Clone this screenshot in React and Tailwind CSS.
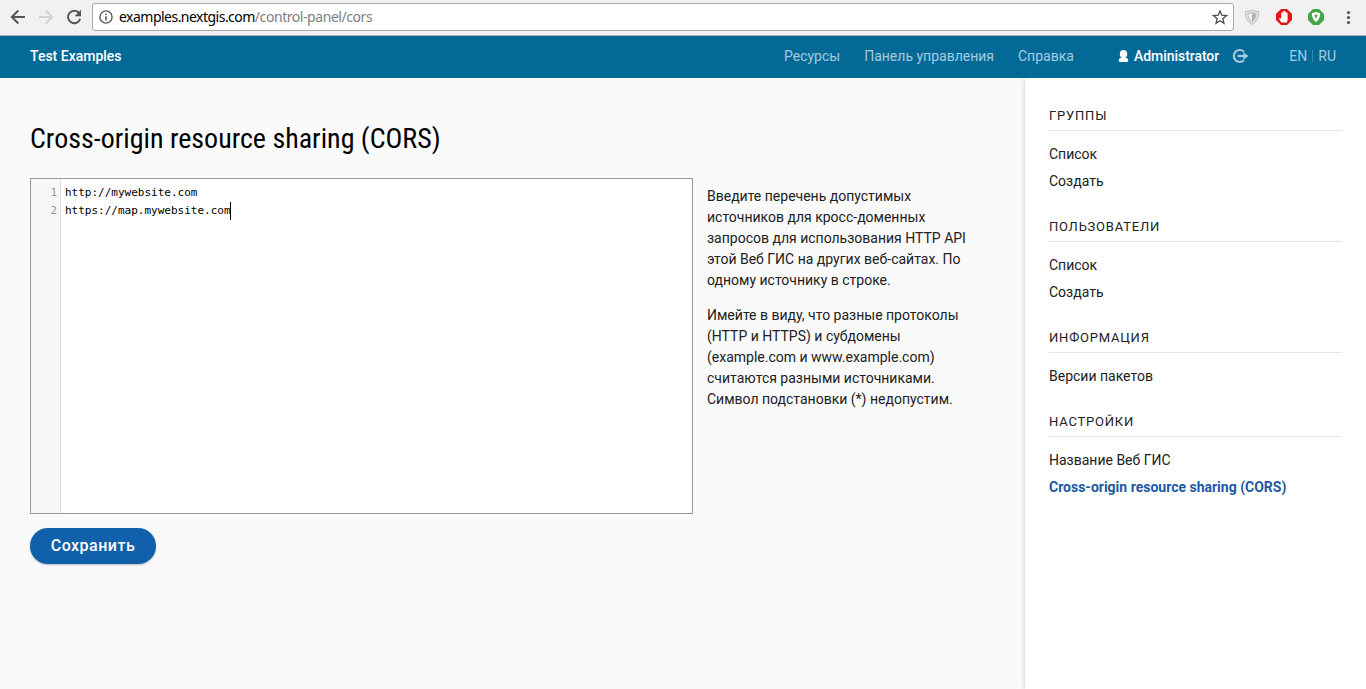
import React from "react";

const groups = [
  { title: "ГРУППЫ", items: [{ text: "Список" }, { text: "Создать" }] },
  { title: "ПОЛЬЗОВАТЕЛИ", items: [{ text: "Список" }, { text: "Создать" }] },
  { title: "ИНФОРМАЦИЯ", items: [{ text: "Версии пакетов" }] },
  {
    title: "НАСТРОЙКИ",
    items: [
      { text: "Название Веб ГИС" },
      { text: "Cross-origin resource sharing (CORS)", active: true },
    ],
  },
];

function BrowserBar() {
  return (
    <div className="flex h-9 items-center border-b border-[#b0b0b0] bg-[#f1f1f1] pr-2.5 pl-2.5 pb-px">
      <svg className="size-4 shrink-0" viewBox="0 0 16 16" fill="none" stroke="#555" strokeWidth="2">
        <path d="M15 8H2.5M8.3 1.5 1.8 8l6.5 6.5" />
      </svg>
      <svg className="ml-3 size-4 shrink-0" viewBox="0 0 16 16" fill="none" stroke="#d2d2d2" strokeWidth="2">
        <path d="M1 8h12.5M7.7 1.5 14.2 8l-6.5 6.5" />
      </svg>
      <svg className="ml-3 size-4 shrink-0" viewBox="0 0 16 16" fill="none" stroke="#555" strokeWidth="2">
        <path d="M13.2 4.2A6.2 6.2 0 1 0 14.2 9.8" />
        <path d="M15 .8v6.4H8.6z" fill="#555" stroke="none" />
      </svg>
      <div className="ml-2.5 flex h-7 w-[1142px] shrink-0 items-center rounded-[3px] border border-[#a9a9a9] bg-white pr-[5px] pl-1.5">
        <svg className="size-3.5 shrink-0" viewBox="0 0 14 14" fill="none" stroke="#5a5a5a" strokeWidth="1.4">
          <circle cx="7" cy="7" r="6.1" />
          <path d="M7 6.2v4.2M7 3.5v1.5" strokeWidth="1.6" />
        </svg>
        <div className="ml-1.5 font-['Noto_Sans',sans-serif] text-[14px] leading-5 whitespace-nowrap text-[#808080]">
          <span className="tracking-[-0.52px] text-black">examples.nextgis.com</span>
          <span className="tracking-[-0.44px]">/control-panel/cors</span>
        </div>
        <svg className="ml-auto size-4 shrink-0" viewBox="0 0 16 16" fill="none" stroke="#4a4a4a" strokeWidth="1.3">
          <path d="m8 1.9 1.8 4.3 4.7.4-3.6 3.1 1.1 4.6L8 11.8l-4 2.5 1.1-4.6-3.6-3.1 4.7-.4z" />
        </svg>
      </div>
      <svg className="ml-2.5 size-4 shrink-0" viewBox="0 0 16 16">
        <path d="M8 .8C6 2 3.500 2.400 1.300 2.400c0 6 2 10.500 6.700 13 4.700-2.500 6.700-7 6.700-13C12.500 2.400 10 2 8 .8z" fill="#e3e3e3" stroke="#bcbcbc" />
        <path d="M8 3.500c-1.300.7-2.700 1-4.100 1.100.2 3.700 1.500 6.500 4.100 8.300 2.600-1.800 3.900-4.600 4.100-8.300C10.700 4.500 9.300 4.200 8 3.500z" fill="#f5f5f5" stroke="#b5b5b5" />
        <path d="M8 4v8.500c2.200-1.700 3.200-4.300 3.500-7.400C10 5 9 4.600 8 4z" fill="#adadad" />
      </svg>
      <svg className="ml-4 size-4 shrink-0" viewBox="0 0 16 16">
        <path d="M5 0h6l5 5v6l-5 5H5l-5-5V5z" fill="#e4141b" />
        <path d="M5.200 13.500 3 9.500l.8-.8 1.400 1.200V4.200c0-1 1.200-1 1.200 0V3c0-1 1.300-1 1.300 0v-.5c0-1 1.300-1 1.300 0V3.200c0-1 1.300-1 1.300 0v1.300c0-1 1.300-.9 1.300 0v6.200L11 13.500z" fill="#fff" />
        <path d="M6.400 4v3.500M7.700 3v4.500M9 3v4.500M10.300 4v3.500" stroke="#f6a8aa" strokeWidth=".35" />
      </svg>
      <svg className="ml-4 size-4 shrink-0" viewBox="0 0 16 16">
        <path d="M5 0h6l5 5v6l-5 5H5l-5-5V5z" fill="#46a546" />
        <path d="M8 3c-1.500.7-2.800.9-4.200.9 0 4 1.400 7.100 4.200 9.100 2.800-2 4.200-5.100 4.200-9.100C10.800 3.900 9.500 3.700 8 3z" fill="#fff" />
        <path d="M6.200 5.800h3.600L8 10z" fill="#46a546" />
      </svg>
      <svg className="ml-4 size-4 shrink-0" viewBox="0 0 16 16" fill="#555">
        <circle cx="8.500" cy="3.500" r="1.600" />
        <circle cx="8.500" cy="8.500" r="1.600" />
        <circle cx="8.500" cy="13.500" r="1.600" />
      </svg>
    </div>
  );
}

function Header() {
  return (
    <header className="flex h-[42px] shrink-0 items-center bg-[#036a98] pr-[30px] pb-0.5 pl-[30px] text-[14px] leading-5 whitespace-nowrap text-[#a5cbdc]">
      <div className="w-[754px] font-medium text-white">Test Examples</div>
      <nav className="flex w-[334px] gap-6">
        <a>Ресурсы</a>
        <a>Панель управления</a>
        <a>Справка</a>
      </nav>
      <svg className="h-3 w-[11px] shrink-0" viewBox="0 0 11 12" fill="#fff">
        <ellipse cx="5.500" cy="3.900" rx="3.700" ry="3.900" />
        <path d="M3.700 6.500h3.600v1.200c1.800.2 2.900.8 2.900 2.100v1c0 .7-.3 1.200-1 1.200H1.800c-.7 0-1-.5-1-1.200v-1c0-1.300 1.100-1.900 2.900-2.100z" />
      </svg>
      <span className="ml-[5px] w-[97px] font-medium tracking-[-0.05px] text-white">Administrator</span>
      <svg className="h-4 w-[18px] shrink-0" viewBox="0 0 18 16" fill="none" stroke="#a5cbdc" strokeWidth="2.200">
        <path d="M13 3.700A6 6 0 1 0 13 12.300" />
        <path d="M6.500 8h6.500" />
        <path d="M12.300 4.200 17.500 8l-5.200 3.800z" fill="#a5cbdc" stroke="none" />
      </svg>
      <div className="ml-auto flex items-center">
        <span>EN</span>
        <span className="mx-[5px] h-3 w-px bg-[#3588ad]" />
        <span>RU</span>
      </div>
    </header>
  );
}

function Editor() {
  return (
    <div className="flex h-[336px] w-[663px] shrink-0 border border-[#999] bg-white font-['DejaVu_Sans_Mono',monospace] text-[11px] leading-[18px]">
      <div className="w-[30px] border-r border-[#ddd] bg-[#f7f7f7] pt-[5px] pr-[3px] text-right text-[#999]">
        <div>1</div>
        <div>2</div>
      </div>
      <div className="pt-[5px] pl-1 text-black">
        <div>http://mywebsite.com</div>
        <div className="flex">
          https://map.mywebsite.com
          <span className="-ml-px h-[18px] w-px bg-black" />
        </div>
      </div>
    </div>
  );
}

export default function App() {
  return (
    <div className="flex h-[689px] w-[1366px] flex-col overflow-hidden bg-[#fafafa] font-['Roboto',sans-serif] text-[#212121]">
      <BrowserBar />
      <Header />
      <div className="flex flex-1">
        <main className="w-[1025px] shrink-0 pt-[41px] pl-[30px]">
          <h1 className="h-[59px] font-['Roboto_Condensed','Roboto',sans-serif] text-[28px] leading-10 font-normal whitespace-nowrap text-black [font-stretch:75%]">
            Cross-origin resource sharing (CORS)
          </h1>
          <div className="flex">
            <Editor />
            <div className="ml-3.5 pt-2 text-[14px] leading-[21px] whitespace-nowrap">
              <p>
                Введите перечень допустимых<br />
                источников для кросс-доменных<br />
                запросов для использования HTTP API<br />
                этой Веб ГИС на других веб-сайтах. По<br />
                одному источнику в строке.
              </p>
              <p className="mt-3.5">
                Имейте в виду, что разные протоколы<br />
                (HTTP и HTTPS) и субдомены<br />
                (example.com и www.example.com)<br />
                считаются разными источниками.<br />
                Символ подстановки (*) недопустим.
              </p>
            </div>
          </div>
          <button className="mt-3.5 h-9 w-[126px] rounded-full bg-[#1160ab] text-[16px] font-medium tracking-[0.5px] text-white shadow-[0_1px_2px_rgba(0,0,0,0.25)]">
            Сохранить
          </button>
        </main>
        <aside className="flex-1 bg-white pt-[27px] pr-6 pl-6 shadow-[0_0_5px_rgba(0,40,30,0.22)] [clip-path:inset(0_0_0_-8px)]">
          {groups.map((group) => (
            <section key={group.title} className="mb-[21px]">
              <h2 className="mb-2.5 border-b border-[#e4e7ea] pb-1 text-[13px] leading-[21px] tracking-[0.8px]">
                {group.title}
              </h2>
              {group.items.map((item) => (
                <div
                  key={item.text}
                  className={
                    item.active
                      ? "text-[14px] leading-[27px] font-bold whitespace-nowrap text-[#1c59a5]"
                      : "text-[14px] leading-[27px]"
                  }
                >
                  {item.text}
                </div>
              ))}
            </section>
          ))}
        </aside>
      </div>
    </div>
  );
}
